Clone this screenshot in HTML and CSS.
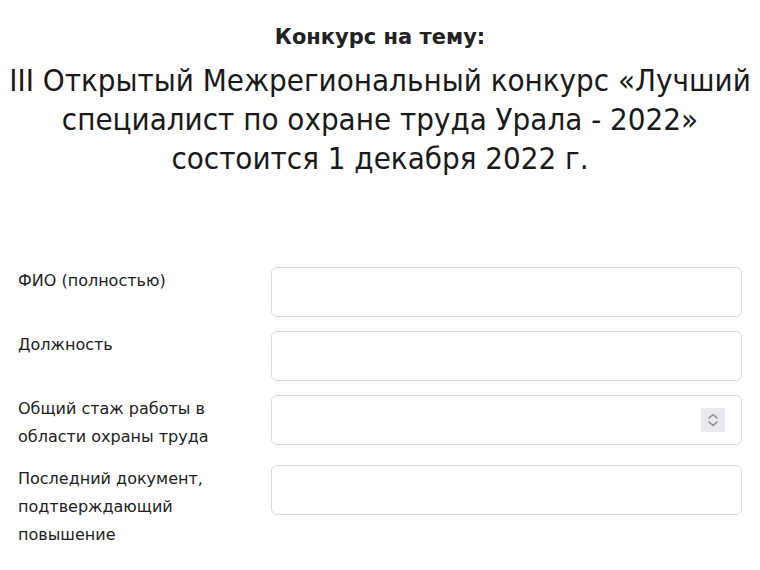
FILE: index.html
```html
<!DOCTYPE html>
<html lang="ru">
<head>
<meta charset="utf-8">
<link rel="stylesheet" href="styles.css">
</head>
<body>
<div class="page">
  <header class="head">
    <h2 class="kicker">Конкурс на тему:</h2>
    <h1 class="title">III Открытый Межрегиональный конкурс «Лучший специалист по охране труда Урала - 2022» состоится 1 декабря 2022 г.</h1>
  </header>
  <form class="form">
    <div class="row">
      <label class="label">ФИО (полностью)</label>
      <div class="field"></div>
    </div>
    <div class="row">
      <label class="label">Должность</label>
      <div class="field"></div>
    </div>
    <div class="row">
      <label class="label">Общий стаж работы в области охраны труда</label>
      <div class="field field-num">
        <span class="spin">
          <svg width="24" height="24" viewBox="0 0 24 24"><path d="M8 10 L12 6.5 L16 10" fill="none" stroke="#8a8d96" stroke-width="1.6" stroke-linecap="round" stroke-linejoin="round"/><path d="M8 14 L12 17.5 L16 14" fill="none" stroke="#8a8d96" stroke-width="1.6" stroke-linecap="round" stroke-linejoin="round"/></svg>
        </span>
      </div>
    </div>
    <div class="row">
      <label class="label">Последний документ, подтверждающий повышение</label>
      <div class="field"></div>
    </div>
  </form>
</div>
</body>
</html>
```
FILE: styles.css
```css
html, body {
  margin: 0;
  padding: 0;
  background: #ffffff;
}
.page {
  width: 760px;
  height: 570px;
  overflow: hidden;
  color: #1c1c1c;
}
.head {
  text-align: center;
  padding-top: 23px;
}
.kicker {
  margin: 0;
  font-family: "DejaVu Sans", sans-serif;
  font-weight: bold;
  font-size: 21px;
  line-height: 28px;
  color: #222;
}
.title {
  margin: 10px 0 0 0;
  font-family: "DejaVu Sans Condensed", "DejaVu Sans", sans-serif;
  font-weight: normal;
  font-size: 31px;
  line-height: 39px;
  padding: 0 4px;
  color: #1a1a1a;
}
.form {
  margin-top: 89px;
  display: flex;
  flex-direction: column;
  gap: 14px;
  padding-left: 18px;
}
.row {
  display: grid;
  grid-template-columns: 253px 471px;
  align-items: start;
}
.label {
  font-family: "DejaVu Sans", sans-serif;
  font-size: 16px;
  line-height: 28px;
  color: #222;
  padding-right: 30px;
}
.field {
  height: 50px;
  box-sizing: border-box;
  border: 1.5px solid #d6dade;
  border-radius: 6px;
  background: #fff;
}
.field-num {
  display: flex;
  justify-content: flex-end;
  align-items: center;
  padding-right: 16px;
}
.spin {
  width: 24px;
  height: 24px;
  background: #e8e8ee;
  display: block;
}
.spin svg {
  display: block;
}
```
